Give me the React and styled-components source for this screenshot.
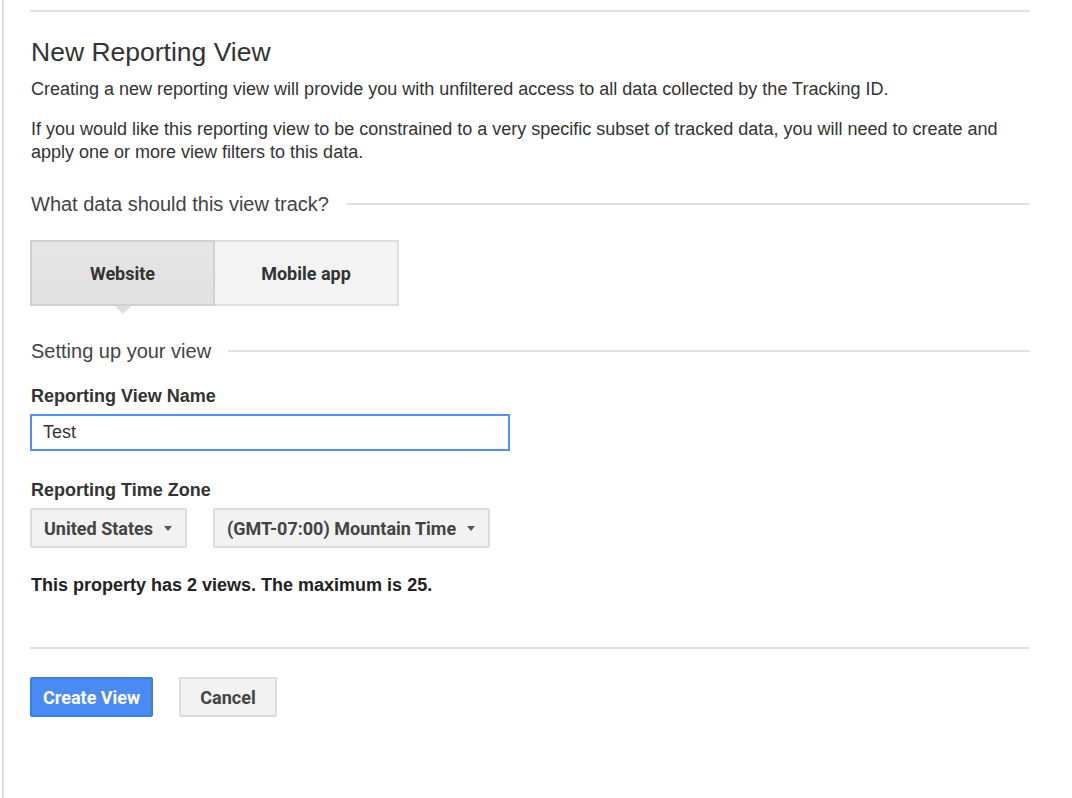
import React from "react";
import styled, { createGlobalStyle } from "styled-components";

const GlobalStyle = createGlobalStyle`
  body {
    margin: 0;
    background: #fff;
    font-family: "Liberation Sans", Arial, sans-serif;
    color: #333;
  }
`;

const Page = styled.div`
  margin-left: 2px;
  border-left: 2px solid #dcdcdc;
  min-height: 798px;
  box-sizing: border-box;
  padding: 10px 0 0 26px;
`;

const Panel = styled.div`
  width: 1000px;
  border-top: 2px solid #e2e2e2;
`;

const Body = styled.div`
  padding-left: 1px;
`;

const Title = styled.h1`
  margin: 25px 0 11px;
  font-size: 26.5px;
  line-height: 30px;
  font-weight: normal;
  color: #333;
`;

const Text = styled.p`
  margin: 0 0 ${(p) => p.gap || 0}px;
  font-size: 18px;
  line-height: 23px;
  color: #333;
`;

const Section = styled.div`
  display: flex;
  align-items: center;
  gap: 17px;
  margin: ${(p) => p.top}px 0 0 -1px;
  padding-left: 1px;
  font-size: 20px;
  line-height: 24px;
  color: #444;

  &::after {
    content: "";
    flex: 1;
    height: 2px;
    background: #e2e2e2;
  }
`;

const Segments = styled.div`
  display: flex;
  margin: 24px 0 0 -1px;
`;

const Segment = styled.button`
  position: relative;
  width: ${(p) => p.w}px;
  height: 66px;
  box-sizing: border-box;
  margin: 0;
  font-family: Roboto, "Liberation Sans", sans-serif;
  font-weight: 700;
  font-size: 18px;
  color: #333;
  cursor: pointer;
  background: ${(p) => (p.active ? "linear-gradient(#e5e5e5, #e1e1e1)" : "#f3f3f3")};
  border: 2px solid ${(p) => (p.active ? "#d0d0d0" : "#dedede")};
  border-left-width: ${(p) => (p.active ? 2 : 0)}px;

  &::after {
    content: "";
    display: ${(p) => (p.active ? "block" : "none")};
    position: absolute;
    left: 50%;
    bottom: -10px;
    margin-left: -8px;
    border-left: 8px solid transparent;
    border-right: 8px solid transparent;
    border-top: 8px solid #dedede;
  }
`;

const Label = styled.div`
  margin-top: ${(p) => p.top}px;
  font-size: 18px;
  line-height: 23px;
  font-weight: bold;
  color: #333;
`;

const Input = styled.input`
  display: block;
  margin: 6px 0 0 -1px;
  width: 480px;
  height: 37px;
  box-sizing: border-box;
  padding: 0 11px;
  border: 2px solid #4d90fe;
  outline: none;
  font-family: "Liberation Sans", Arial, sans-serif;
  font-size: 18px;
  color: #333;
  caret-color: #222;
`;

const Row = styled.div`
  display: flex;
  gap: 26px;
  margin: ${(p) => p.top || 0}px 0 0 -1px;
`;

const Select = styled.button`
  display: flex;
  align-items: center;
  gap: 11px;
  height: 40px;
  box-sizing: border-box;
  padding: 0 13px 0 12px;
  background: #f2f2f2;
  border: 2px solid #dcdcdc;
  border-radius: 2px;
  font-family: Roboto, "Liberation Sans", sans-serif;
  font-weight: 700;
  font-size: 18px;
  color: #444;
  cursor: pointer;

  &::after {
    content: "";
    border-left: 4.5px solid transparent;
    border-right: 4.5px solid transparent;
    border-top: 5px solid #555;
  }
`;

const Note = styled.div`
  margin-top: 26px;
  font-size: 18px;
  line-height: 23px;
  font-weight: bold;
  color: #222;
`;

const Rule = styled.div`
  margin: 50px 0 0 -1px;
  height: 2px;
  background: #e2e2e2;
`;

const Button = styled.button`
  height: 40px;
  box-sizing: border-box;
  padding: 0 ${(p) => p.pad}px;
  border-radius: 2px;
  font-family: Roboto, "Liberation Sans", sans-serif;
  font-weight: 700;
  font-size: 18px;
  cursor: pointer;
  color: ${(p) => (p.primary ? "#fff" : "#444")};
  background: ${(p) => (p.primary ? "#4a8af4" : "#f2f2f2")};
  border: 2px solid ${(p) => (p.primary ? "#3b7de9" : "#dcdcdc")};
`;

export default function App() {
  return (
    <>
      <GlobalStyle />
      <Page>
        <Panel>
          <Body>
            <Title>New Reporting View</Title>
            <Text gap={17}>
              Creating a new reporting view will provide you with unfiltered access to all data collected by the Tracking ID.
            </Text>
            <Text>
              If you would like this reporting view to be constrained to a very specific subset of tracked data, you will need to create and apply one or more view filters to this data.
            </Text>

            <Section top={28}>What data should this view track?</Section>
            <Segments>
              <Segment active w={185}>Website</Segment>
              <Segment w={184}>Mobile app</Segment>
            </Segments>

            <Section top={33}>Setting up your view</Section>

            <Label top={22}>Reporting View Name</Label>
            <Input defaultValue="Test" autoFocus />

            <Label top={28}>Reporting Time Zone</Label>
            <Row top={6}>
              <Select>United States</Select>
              <Select>(GMT-07:00) Mountain Time</Select>
            </Row>

            <Note>This property has 2 views. The maximum is 25.</Note>

            <Rule />
            <Row top={28}>
              <Button primary pad={11}>Create View</Button>
              <Button pad={19}>Cancel</Button>
            </Row>
          </Body>
        </Panel>
      </Page>
    </>
  );
}
